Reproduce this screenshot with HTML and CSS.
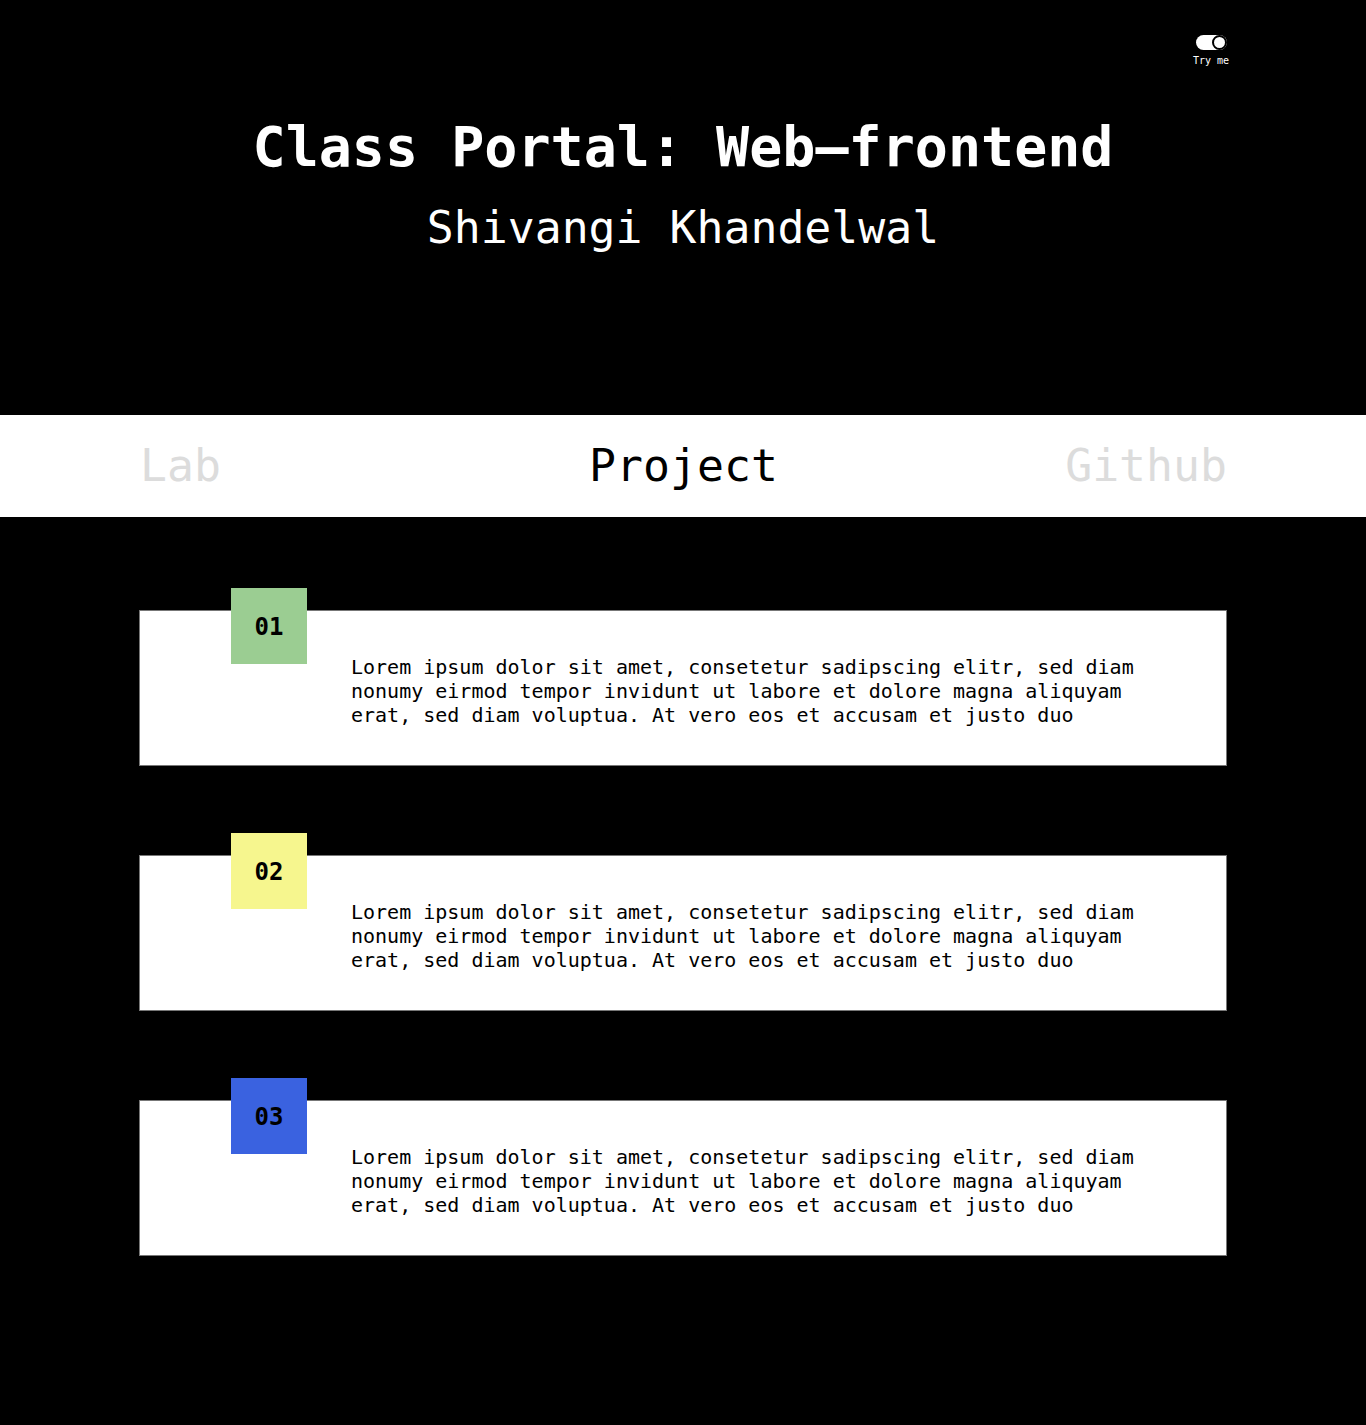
FILE: index.html
```html
<!DOCTYPE html>
<html>
<head>
<meta charset="utf-8">
<link rel="stylesheet" href="styles.css">
</head>
<body>
<header class="hero">
  <div class="toggle-wrap">
    <span class="toggle"><span class="knob"></span></span>
    <span class="toggle-label">Try me</span>
  </div>
  <h1 class="title">Class Portal: Web—frontend</h1>
  <p class="subtitle">Shivangi Khandelwal</p>
</header>
<nav class="nav">
  <a class="nav-item dim left">Lab</a>
  <a class="nav-item active center">Project</a>
  <a class="nav-item dim right">Github</a>
</nav>
<main class="list">
  <section class="card">
    <div class="badge green">01</div>
    <p class="card-text">Lorem ipsum dolor sit amet, consetetur sadipscing elitr, sed diam nonumy eirmod tempor invidunt ut labore et dolore magna aliquyam erat, sed diam voluptua. At vero eos et accusam et justo duo</p>
  </section>
  <section class="card">
    <div class="badge yellow">02</div>
    <p class="card-text">Lorem ipsum dolor sit amet, consetetur sadipscing elitr, sed diam nonumy eirmod tempor invidunt ut labore et dolore magna aliquyam erat, sed diam voluptua. At vero eos et accusam et justo duo</p>
  </section>
  <section class="card">
    <div class="badge blue">03</div>
    <p class="card-text">Lorem ipsum dolor sit amet, consetetur sadipscing elitr, sed diam nonumy eirmod tempor invidunt ut labore et dolore magna aliquyam erat, sed diam voluptua. At vero eos et accusam et justo duo</p>
  </section>
</main>
</body>
</html>
```

FILE: styles.css
```css
* { box-sizing: border-box; }
html, body {
  margin: 0;
  padding: 0;
  background: #000;
  font-family: "DejaVu Sans Mono", "Liberation Mono", monospace;
}
body { min-height: 1425px; }

.hero {
  position: relative;
  height: 415px;
  background: #000;
  color: #fff;
  text-align: center;
  padding-top: 112px;
}
.toggle-wrap {
  position: absolute;
  top: 35px;
  left: 1191px;
  width: 40px;
  display: flex;
  flex-direction: column;
  align-items: center;
}
.toggle {
  display: flex;
  justify-content: flex-end;
  align-items: center;
  width: 31px;
  height: 15px;
  border-radius: 8px;
  background: #fff;
}
.knob {
  width: 15px;
  height: 15px;
  border-radius: 50%;
  background: #fff;
  border: 2px solid #000;
}
.toggle-label {
  margin-top: 5px;
  font-size: 10px;
  line-height: 12px;
  color: #fff;
  white-space: nowrap;
}
.title {
  margin: 0;
  font-size: 55px;
  line-height: 70px;
  font-weight: bold;
}
.subtitle {
  margin: 18px 0 0;
  font-size: 44.8px;
  line-height: 56px;
}

.nav {
  height: 102px;
  background: #fff;
  display: grid;
  grid-template-columns: 1fr auto 1fr;
  align-items: center;
  padding: 0 139px 0 140px;
}
.nav-item {
  font-size: 44.8px;
  line-height: 56px;
  color: #000;
}
.nav-item.left { justify-self: start; }
.nav-item.center { justify-self: center; }
.nav-item.right { justify-self: end; }
.nav-item.dim { color: #dcdcdc; }

.list {
  padding: 93px 139px 170px;
  display: flex;
  flex-direction: column;
  gap: 89px;
}
.card {
  position: relative;
  height: 156px;
  background: #fff;
  border: 1px solid #777;
  padding: 44px 20px 0 211px;
}
.badge {
  position: absolute;
  top: -23px;
  left: 91px;
  width: 76px;
  height: 76px;
  display: flex;
  align-items: center;
  justify-content: center;
  padding-top: 2px;
  font-size: 24px;
  font-weight: bold;
  color: #000;
}
.green { background: #9bcd92; }
.yellow { background: #f6f68e; }
.blue { background: #3a62e0; }
.card-text {
  margin: 0;
  max-width: 800px;
  font-size: 20px;
  line-height: 24px;
  color: #000;
}
```
